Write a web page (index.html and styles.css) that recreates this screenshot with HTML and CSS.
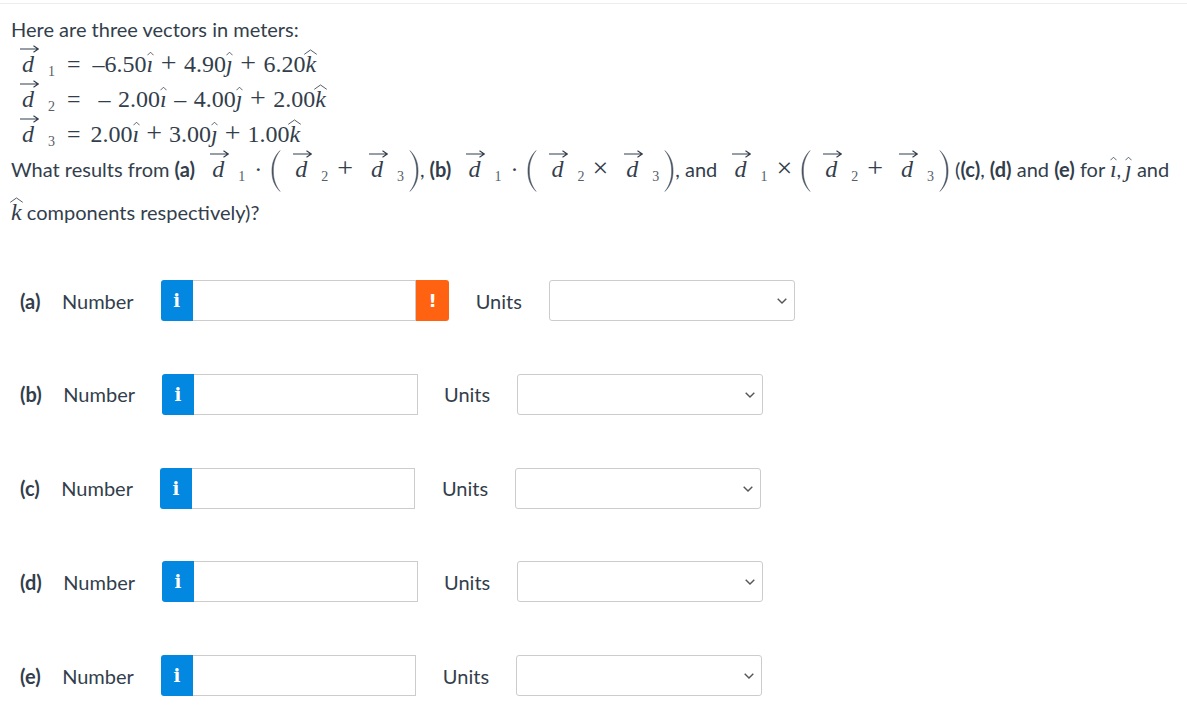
FILE: index.html
```html
<!DOCTYPE html>
<html>
<head>
    <link rel="stylesheet" href="styles.css">
</head>
<body>
    <svg class="defs" width="0" height="0">
        <symbol id="arrow" viewBox="0 0 19 8"><path d="M0 4H18M13.5 .8L18.3 4L13.5 7.2" fill="none" stroke="currentColor" stroke-width="1.1"/></symbol>
        <symbol id="hat" viewBox="0 0 8 5"><path d="M.5 4.5L4 1L7.5 4.5" fill="none" stroke="currentColor" stroke-width=".9"/></symbol>
        <symbol id="wide" viewBox="0 0 14 6"><path d="M.3 5.5L7 .8L13.7 5.5" fill="none" stroke="currentColor" stroke-width=".9"/></symbol>
        <symbol id="lp" viewBox="0 0 11 46"><path d="M10 .5C3.5 7 1 14 1 23S3.5 39 10 45.500C5 39 2.600 32 2.600 23S5 7 10 .5Z" fill="currentColor" stroke="currentColor" stroke-width=".5"/></symbol>
        <symbol id="rp" viewBox="0 0 11 46"><path d="M1 .5C7.500 7 10 14 10 23S7.500 39 1 45.500C6 39 8.400 32 8.400 23S6 7 1 .5Z" fill="currentColor" stroke="currentColor" stroke-width=".5"/></symbol>
        <symbol id="chev" viewBox="0 0 10 6"><path d="M.7 .7L5 5L9.300 .7" fill="none" stroke="currentColor" stroke-width="1.4"/></symbol>
    </svg>

    <div class="question">
        <p class="line intro">Here are three vectors in meters:</p>

        <p class="line eq"><span class="m vec"><svg class="arrow"><use href="#arrow"/></svg><i>d</i></span><span class="m idx">1</span><span class="m rel">=</span><span class="m sum">–6.50<span class="hat"><svg class="cap"><use href="#hat"/></svg><i>ı</i></span> <span class="big">+</span> 4.90<span class="hat"><svg class="cap"><use href="#hat"/></svg><i>ȷ</i></span> <span class="big">+</span> 6.20<span class="hat"><svg class="cap wide"><use href="#wide"/></svg><i>k</i></span></span></p>
        <p class="line eq"><span class="m vec"><svg class="arrow"><use href="#arrow"/></svg><i>d</i></span><span class="m idx">2</span><span class="m rel">=</span><span class="m sum neg">– 2.00<span class="hat"><svg class="cap"><use href="#hat"/></svg><i>ı</i></span> – 4.00<span class="hat"><svg class="cap"><use href="#hat"/></svg><i>ȷ</i></span> <span class="big">+</span> 2.00<span class="hat"><svg class="cap wide"><use href="#wide"/></svg><i>k</i></span></span></p>
        <p class="line eq"><span class="m vec"><svg class="arrow"><use href="#arrow"/></svg><i>d</i></span><span class="m idx">3</span><span class="m rel">=</span><span class="m sum tight">2.00<span class="hat"><svg class="cap"><use href="#hat"/></svg><i>ı</i></span> <span class="big">+</span> 3.00<span class="hat"><svg class="cap"><use href="#hat"/></svg><i>ȷ</i></span> <span class="big">+</span> 1.00<span class="hat"><svg class="cap wide"><use href="#wide"/></svg><i>k</i></span></span></p>

        <p class="line ask">What results from <b>(a)</b>
            <span class="m vec first"><svg class="arrow"><use href="#arrow"/></svg><i>d</i></span><span class="m idx">1</span><span class="m op">·</span><svg class="paren"><use href="#lp"/></svg><span class="m vec"><svg class="arrow"><use href="#arrow"/></svg><i>d</i></span><span class="m idx">2</span><span class="m big op inner">+</span><span class="m vec"><svg class="arrow"><use href="#arrow"/></svg><i>d</i></span><span class="m idx">3</span><svg class="paren close"><use href="#rp"/></svg>, <b>(b)</b>
            <span class="m vec first"><svg class="arrow"><use href="#arrow"/></svg><i>d</i></span><span class="m idx">1</span><span class="m op">·</span><svg class="paren"><use href="#lp"/></svg><span class="m vec"><svg class="arrow"><use href="#arrow"/></svg><i>d</i></span><span class="m idx">2</span><span class="m big op inner cross">×</span><span class="m vec"><svg class="arrow"><use href="#arrow"/></svg><i>d</i></span><span class="m idx">3</span><svg class="paren close"><use href="#rp"/></svg>, and
            <span class="m vec first"><svg class="arrow"><use href="#arrow"/></svg><i>d</i></span><span class="m idx">1</span><span class="m big op">×</span><svg class="paren"><use href="#lp"/></svg><span class="m vec"><svg class="arrow"><use href="#arrow"/></svg><i>d</i></span><span class="m idx">2</span><span class="m big op inner">+</span><span class="m vec"><svg class="arrow"><use href="#arrow"/></svg><i>d</i></span><span class="m idx">3</span><svg class="paren close"><use href="#rp"/></svg> (<b>(c)</b>, <b>(d)</b> and <b>(e)</b> for <span class="m hat"><svg class="cap"><use href="#hat"/></svg><i>ı</i></span>,<span class="m hat unit-j"><svg class="cap"><use href="#hat"/></svg><i>ȷ</i></span> and</p>
        <p class="line last"><span class="m hat"><svg class="cap wide"><use href="#wide"/></svg><i>k</i></span> components respectively)?</p>
    </div>

    <div class="answers">
        <div class="row">
            <b>(a)</b><span class="num">Number</span>
            <span class="info">i</span><input class="field" type="text"><span class="alert">!</span>
            <span class="units">Units</span>
            <span class="unit-wrap"><select class="unit-select"></select><svg class="chev"><use href="#chev"/></svg></span>
        </div>
        <div class="row">
            <b>(b)</b><span class="num">Number</span>
            <span class="info">i</span><input class="field" type="text">
            <span class="units">Units</span>
            <span class="unit-wrap"><select class="unit-select"></select><svg class="chev"><use href="#chev"/></svg></span>
        </div>
        <div class="row">
            <b>(c)</b><span class="num">Number</span>
            <span class="info">i</span><input class="field" type="text">
            <span class="units">Units</span>
            <span class="unit-wrap"><select class="unit-select"></select><svg class="chev"><use href="#chev"/></svg></span>
        </div>
        <div class="row">
            <b>(d)</b><span class="num">Number</span>
            <span class="info">i</span><input class="field" type="text">
            <span class="units">Units</span>
            <span class="unit-wrap"><select class="unit-select"></select><svg class="chev"><use href="#chev"/></svg></span>
        </div>
        <div class="row">
            <b>(e)</b><span class="num">Number</span>
            <span class="info">i</span><input class="field" type="text">
            <span class="units">Units</span>
            <span class="unit-wrap"><select class="unit-select"></select><svg class="chev"><use href="#chev"/></svg></span>
        </div>
    </div>
</body>
</html>
```

FILE: styles.css
```css
body {
    margin: 3px 0 0;
    border-top: 1px solid #eeeeee;
    background: #fff;
    color: #333e4c;
    font-family: Lato, sans-serif;
    font-size: 20px;
}
.defs {
    display: block;
    height: 0;
}
.question {
    padding-left: 11px;
}
.line {
    margin: 0;
    white-space: nowrap;
}
.intro {
    height: 31px;
    padding-top: 12px;
    line-height: 26px;
}
.eq {
    height: 35px;
    line-height: 35px;
    padding-left: 11px;
}
.ask {
    height: 45px;
    line-height: 35px;
}
.last {
    height: 30px;
    line-height: 30px;
}
b {
    font-weight: 700;
}

/* math */
.m {
    font-family: "Liberation Serif", serif;
    font-size: 24px;
    line-height: 0;
}
.sum {
    word-spacing: 1.5px;
}
.big {
    font-size: 28px;
    line-height: 0;
}
.vec {
    display: inline-block;
    position: relative;
    width: 12px;
    line-height: 1;
}
.arrow {
    position: absolute;
    left: -2px;
    top: -7px;
    width: 19px;
    height: 8px;
}
.first {
    margin-left: 12px;
}
.idx {
    margin-left: 14px;
    font-size: 14px;
    color: #555d68;
    position: relative;
    top: 4px;
}
.rel {
    margin: 0 12px;
}
.neg {
    margin-left: 6px;
}
.tight {
    margin-left: -2px;
    word-spacing: 1px;
}
.op {
    margin: 0 9px;
}
.op.inner {
    margin: 0 18px 0 9px;
}
.op.cross {
    margin-left: 8px;
}
.hat {
    display: inline-block;
    position: relative;
    line-height: 1;
}
.unit-j {
    margin-left: 4px;
}
.cap {
    position: absolute;
    left: 0;
    top: -1px;
    width: 7px;
    height: 5px;
}
.cap.wide {
    width: 13px;
    height: 6px;
    left: -1px;
    top: -3px;
}
.paren {
    width: 10px;
    height: 44px;
    margin: -10px 14px -10px 0;
    vertical-align: -6px;
    color: #4a5461;
}
.paren.close {
    margin: -10px 1px -10px 5px;
}

/* answer rows */
.answers {
    padding: 53px 0 0 20px;
}
.row {
    display: flex;
    align-items: center;
    height: 41px;
    margin-bottom: 52.75px;
}
.row:last-child {
    margin-bottom: 0;
}
.num {
    margin-left: 21.5px;
    margin-right: 27px;
}
.info, .alert {
    display: flex;
    align-items: center;
    justify-content: center;
    height: 41px;
    color: #fff;
    font-weight: 700;
}
.info {
    width: 32px;
    background: #0288e0;
    border-radius: 3px 0 0 3px;
    font-family: "DejaVu Serif", serif;
    font-size: 18px;
}
.alert {
    width: 33px;
    background: #ff6312;
    border-radius: 0 3px 3px 0;
    font-family: "DejaVu Sans", sans-serif;
    font-size: 18px;
}
.field {
    width: 223.5px;
    height: 41px;
    padding: 0 8px;
    box-sizing: border-box;
    border: 1px solid #cccccc;
    border-left: none;
    outline: none;
}
.units {
    margin: 0 27px 0 26.5px;
}
.unit-wrap {
    position: relative;
    display: block;
    width: 246px;
    height: 41px;
}
.unit-select {
    display: block;
    width: 100%;
    height: 100%;
    box-sizing: border-box;
    appearance: none;
    background: #fff;
    border: 1px solid #cccccc;
    border-radius: 3px;
}
.chev {
    position: absolute;
    right: 8px;
    top: 18px;
    width: 10px;
    height: 6px;
    color: #555555;
}
```
